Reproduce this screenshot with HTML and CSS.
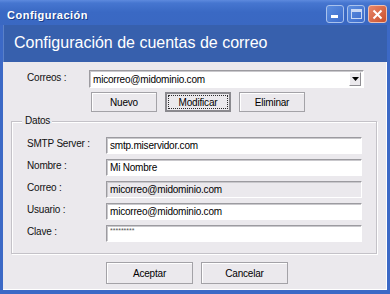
FILE: index.html
```html
<!doctype html>
<html lang="es">
<head>
	<meta charset="UTF-8">
	<title>Configuración</title>
	<link rel="stylesheet" href="styles.css">
</head>
<body>
	<div class="window">
		<div class="titlebar">
			<span class="title">Configuración</span>
			<div class="controls">
				<span class="ctl ctl-min"><span class="min-bar"></span></span>
				<span class="ctl ctl-max"><span class="max-box"></span></span>
				<span class="ctl ctl-close">
					<svg width="11" height="11" viewBox="0 0 11 11"><path d="M1.5 1.5 L9.5 9.5 M9.5 1.5 L1.5 9.5" stroke="#fff" stroke-width="2" fill="none"/></svg>
				</span>
			</div>
		</div>
		<div class="frame">
			<div class="header">Configuración de cuentas de correo</div>
			<div class="client">
				<div class="row-correos">
					<span class="label">Correos :</span>
					<div class="combo">
						<span class="combo-text">micorreo@midominio.com</span>
						<span class="combo-btn">
							<svg width="7" height="4" viewBox="0 0 7 4"><path d="M0 0 H7 L3.5 4 Z" fill="#000"/></svg>
						</span>
					</div>
				</div>
				<div class="actions">
					<button class="btn">Nuevo</button>
					<button class="btn btn-focus"><span class="focus-ring">Modificar</span></button>
					<button class="btn">Eliminar</button>
				</div>
				<div class="group">
					<div class="group-title">Datos</div>
					<div class="form-row">
						<span class="label">SMTP Server :</span>
						<div class="field">smtp.miservidor.com</div>
					</div>
					<div class="form-row">
						<span class="label">Nombre :</span>
						<div class="field">Mi Nombre</div>
					</div>
					<div class="form-row">
						<span class="label">Correo :</span>
						<div class="field field-disabled">micorreo@midominio.com</div>
					</div>
					<div class="form-row">
						<span class="label">Usuario :</span>
						<div class="field">micorreo@midominio.com</div>
					</div>
					<div class="form-row">
						<span class="label">Clave :</span>
						<div class="field field-pass">*********</div>
					</div>
				</div>
				<div class="footer">
					<button class="btn btn-big">Aceptar</button>
					<button class="btn btn-big">Cancelar</button>
				</div>
			</div>
		</div>
	</div>
</body>
</html>
```

FILE: styles.css
```css
*{
	margin: 0;
	padding: 0;
	box-sizing: border-box;
}
body{
	font-family: "Liberation Sans", Arial, sans-serif;
	font-size: 10px;
	background: #fff;
}
.window{
	width: 390px;
	height: 294px;
	background: #3c69c6;
	display: flex;
	flex-direction: column;
}
.titlebar{
	height: 25px;
	display: flex;
	justify-content: space-between;
	align-items: flex-start;
	padding: 8px 3px 0 7px;
	background: linear-gradient(#5d8ade 0, #4676d0 3px, #3a69c4 12px, #3a68c2 100%);
}
.title{
	color: #fff;
	font-weight: bold;
	font-size: 11px;
	line-height: 14px;
	letter-spacing: 0.5px;
	text-shadow: 1px 1px 0 #1c3f8a;
}
.controls{
	display: flex;
	gap: 3px;
	margin-top: -3px;
}
.ctl{
	width: 18px;
	height: 18px;
	border: 1px solid #a9c2ec;
	border-radius: 3px;
	background: linear-gradient(135deg, #5b8ddf, #3d6ccb);
	display: flex;
}
.ctl-min{
	align-items: flex-end;
	padding: 0 0 4px 4px;
}
.min-bar{
	width: 7px;
	height: 3px;
	background: #fff;
}
.ctl-max{
	justify-content: center;
	align-items: center;
}
.max-box{
	width: 11px;
	height: 10px;
	border: 1px solid #c9d8f4;
	border-top-width: 3px;
}
.ctl-close{
	width: 19px;
	border-color: #f0c0ae;
	background: linear-gradient(135deg, #e8876a, #c9502c);
	justify-content: center;
	align-items: center;
}
.frame{
	flex: 1;
	display: flex;
	flex-direction: column;
	padding: 0 3px 4px 3px;
}
.header{
	height: 37px;
	background: #3760ad;
	color: #fff;
	font-size: 16px;
	line-height: 36px;
	padding-left: 10px;
	border-left: 1px solid #5a80c8;
}
.client{
	flex: 1;
	background: #ebe9ed;
	padding-top: 8px;
	border-right: 1px solid #fff;
	border-bottom: 1px solid #fff;
}
.label{
	color: #111;
	letter-spacing: -0.2px;
}
.row-correos{
	display: flex;
	align-items: center;
	padding-left: 24px;
}
.row-correos .label{
	width: 62px;
	margin-top: -4px;
}
.combo{
	width: 275px;
	height: 18px;
	background: #fff;
	border-top: 1px solid #9c9ba0;
	border-left: 1px solid #9c9ba0;
	border-right: 1px solid #fff;
	border-bottom: 1px solid #fff;
	box-shadow: inset 1px 1px 0 #c9c8cc;
	display: flex;
	align-items: center;
	justify-content: space-between;
	padding: 0 2px 0 3px;
}
.combo-text{
	letter-spacing: -0.2px;
}
.combo-btn{
	width: 12px;
	height: 14px;
	background: #ebe9ed;
	border: 1px solid #fff;
	border-right-color: #8f8e93;
	border-bottom-color: #8f8e93;
	display: flex;
	align-items: center;
	justify-content: center;
}
.actions{
	display: flex;
	gap: 8px;
	padding-left: 88px;
	margin-top: 4px;
}
.btn{
	width: 66px;
	height: 20px;
	font-family: "Liberation Sans", Arial, sans-serif;
	font-size: 10px;
	letter-spacing: -0.2px;
	color: #000;
	background: #ebe9ed;
	border: 1px solid #a3a2a7;
	box-shadow: inset 1px 1px 0 #fff;
	display: flex;
	align-items: center;
	justify-content: center;
}
.btn-focus{
	border: 2px solid #8a898e;
	box-shadow: none;
	padding: 1px;
}
.focus-ring{
	width: 100%;
	height: 100%;
	border: 1px dotted #2a2a2a;
	display: flex;
	align-items: center;
	justify-content: center;
}
.group{
	width: 366px;
	height: 133px;
	margin: 9px 0 0 8px;
	border: 1px solid #c4c2c8;
	box-shadow: inset 1px 1px 0 #fff, 1px 1px 0 #fff;
	padding: 0 0 0 15px;
}
.group-title{
	width: fit-content;
	margin: -7px 0 0 -5px;
	padding: 0 2px 0 3px;
	background: #ebe9ed;
	line-height: 12px;
	color: #111;
	letter-spacing: -0.2px;
}
.form-row{
	display: flex;
	align-items: flex-start;
	height: 17px;
	margin-top: 5px;
}
.group-title + .form-row{
	margin-top: 10px;
}
.form-row .label{
	width: 79px;
	line-height: 12px;
	margin-top: 1px;
}
.field{
	width: 256px;
	height: 17px;
	background: #fff;
	border-top: 1px solid #9c9ba0;
	border-left: 1px solid #9c9ba0;
	border-right: 1px solid #fff;
	border-bottom: 1px solid #fff;
	box-shadow: inset 1px 1px 0 #c9c8cc;
	padding-left: 3px;
	line-height: 15px;
	letter-spacing: -0.2px;
	color: #000;
}
.field-disabled{
	background: #ebe9ed;
}
.field-pass{
	font-size: 7px;
	line-height: 9px;
	letter-spacing: 0;
	color: #555;
}
.footer{
	display: flex;
	gap: 8px;
	padding-left: 103px;
	margin-top: 8px;
}
.btn-big{
	width: 87px;
	height: 22px;
}
```
